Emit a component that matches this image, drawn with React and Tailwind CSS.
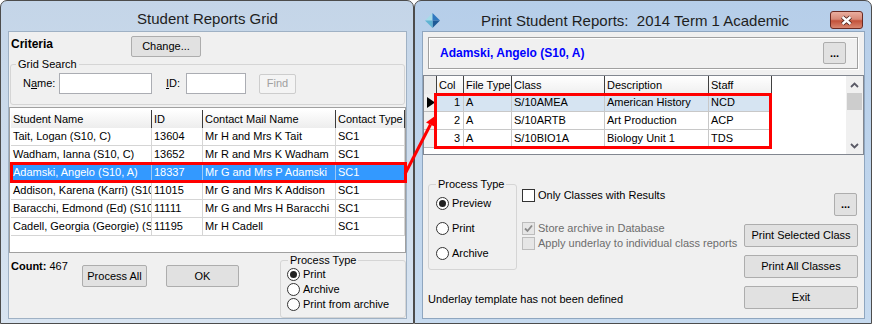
import React from 'react';

const leftRows = [
  ['Tait, Logan (S10, C)', '13604', 'Mr H and Mrs K Tait', 'SC1'],
  ['Wadham, Ianna (S10, C)', '13652', 'Mr R and Mrs K Wadham', 'SC1'],
  ['Adamski, Angelo (S10, A)', '18337', 'Mr G and Mrs P Adamski', 'SC1'],
  ['Addison, Karena (Karri) (S10, A)', '11015', 'Mr G and Mrs K Addison', 'SC1'],
  ['Baracchi, Edmond (Ed) (S10, A)', '11111', 'Mr G and Mrs H Baracchi', 'SC1'],
  ['Cadell, Georgia (Georgie) (S10, A)', '11195', 'Mr H Cadell', 'SC1'],
];

const classRows = [
  ['1', 'A', 'S/10AMEA', 'American History', 'NCD'],
  ['2', 'A', 'S/10ARTB', 'Art Production', 'ACP'],
  ['3', 'A', 'S/10BIO1A', 'Biology Unit 1', 'TDS'],
];

function Btn({ className = '', disabled, children }) {
  const look = disabled
    ? 'border-[#cdcdcd] bg-[#f4f4f4] text-[#a0a0a0]'
    : 'border-[#adadad] bg-[#e1e1e1] text-black';
  return (
    <div className={`flex items-center justify-center border rounded-[2px] whitespace-nowrap ${look} ${className}`}>
      {children}
    </div>
  );
}

function Radio({ checked, children }) {
  return (
    <div className="flex items-center gap-[3px]">
      <span className="w-[13px] h-[13px] rounded-full border border-[#333] bg-white flex items-center justify-center">
        {checked && <span className="w-[7px] h-[7px] rounded-full bg-[#222]" />}
      </span>
      <span>{children}</span>
    </div>
  );
}

function Check({ checked, disabled, children }) {
  return (
    <div className={`flex items-center gap-[3px] h-[15px] ${disabled ? 'text-[#6d6d6d]' : ''}`}>
      <span
        className={`w-[13px] h-[13px] border flex items-center justify-center ${
          disabled ? 'border-[#bcbcbc] bg-[#e6e6e6]' : 'border-[#333] bg-white'
        }`}
      >
        {checked && (
          <svg width="9" height="9" viewBox="0 0 9 9">
            <path d="M1 4.5 L3.5 7 L8 1.5" fill="none" stroke="#8a8a8a" strokeWidth="1.8" />
          </svg>
        )}
      </span>
      <span>{children}</span>
    </div>
  );
}

function Chevron({ down }) {
  return (
    <svg width="9" height="6" viewBox="0 0 9 6">
      <path d={down ? 'M1 1 L4.5 4.5 L8 1' : 'M1 5 L4.5 1.5 L8 5'} fill="none" stroke="#5a5a66" strokeWidth="1.8" />
    </svg>
  );
}

function LeftWindow() {
  const widths = ['w-[141px]', 'w-[51px]', 'w-[133px]', 'flex-1'];
  return (
    <div className="w-[414px] h-[324px] flex flex-col border border-[#4c4c4c] rounded-t-[7px] bg-linear-to-b from-[#c4d5e8] to-[#d8e4f1] pl-[7px] pr-[6px] pb-[4px]">
      <div className="h-[30px] flex justify-center pt-[9px] text-[15px] leading-[17px] text-[#1e1e1e]">
        Student Reports Grid
      </div>
      <div className="flex-1 border border-[#9fb1c4] bg-[#f0f0f0] flex flex-col">
        <div className="flex items-center pt-[4px] h-[25px]">
          <div className="w-[122px] pl-[2px] mb-[6px] font-bold text-[12px]">Criteria</div>
          <Btn className="w-[70px] h-[21px]">Change...</Btn>
        </div>

        <fieldset className="mx-[1px] h-[48px] border border-[#d5d5d5] rounded-[3px]">
          <legend className="ml-[5px] px-[2px] leading-[14px]">Grid Search</legend>
          <div className="flex items-center pl-[12px] pt-[2px]">
            <span className="w-[36px]">
              N<u>a</u>me:
            </span>
            <div className="w-[93px] h-[21px] bg-white border border-[#abadb3]" />
            <span className="ml-[14px] w-[20px]">
              <u>I</u>D:
            </span>
            <div className="w-[60px] h-[21px] bg-white border border-[#abadb3]" />
            <Btn disabled className="ml-[13px] w-[37px] h-[20px]">
              Find
            </Btn>
          </div>
        </fieldset>

        <div className="mt-[2px] h-[146px] border border-[#a0a0a0] bg-white pt-[2px] pl-[1px]">
          <div className="flex h-[18px] bg-linear-to-b from-white to-[#ededed]">
            {['Student Name', 'ID', 'Contact Mail Name', 'Contact Type'].map((h, i) => (
              <div key={h} className={`${widths[i]} flex items-center pl-[2px] border-r border-[#3c3c3c] whitespace-nowrap overflow-hidden`}>
                {h}
              </div>
            ))}
          </div>
          {leftRows.map((r, ri) => {
            const sel = ri === 2;
            return (
              <div key={ri} className={`flex h-[18px] border-b ${sel ? 'bg-[#3399ff] text-white border-[#3399ff]' : 'border-[#d5d5d5]'}`}>
                {r.map((c, i) => (
                  <div
                    key={i}
                    className={`${widths[i]} flex items-center pl-[2px] border-r whitespace-nowrap overflow-hidden ${sel ? 'border-[#9cc8f5]' : 'border-[#d5d5d5]'}`}
                  >
                    {c}
                  </div>
                ))}
              </div>
            );
          })}
        </div>

        <div className="flex h-[65px]">
          <div className="w-[73px] pl-[2px] pt-[5px]">
            <b>Count:</b> 467
          </div>
          <Btn className="mt-[12px] w-[65px] h-[22px]">Process All</Btn>
          <Btn className="mt-[12px] ml-[19px] w-[73px] h-[22px]">OK</Btn>
          <fieldset className="ml-auto w-[126px] h-full border border-[#d5d5d5] rounded-[3px]">
            <legend className="ml-[7px] px-[2px] leading-[14px]">Process Type</legend>
            <div className="pl-[6px]">
              <div className="h-[15px] flex items-center"><Radio checked>Print</Radio></div>
              <div className="h-[15px] flex items-center"><Radio>Archive</Radio></div>
              <div className="h-[15px] flex items-center"><Radio>Print from archive</Radio></div>
            </div>
          </fieldset>
        </div>
      </div>
    </div>
  );
}

function RightWindow() {
  const widths = ['w-[27px]', 'w-[48px]', 'w-[93px]', 'w-[104px]', 'w-[63px]'];
  return (
    <div className="w-[458px] h-[324px] flex flex-col border border-[#4c4c4c] rounded-t-[7px] bg-linear-to-b from-[#b6cee9] to-[#c6daef] pl-[7px] pr-[6px] pb-[4px]">
      <div className="h-[30px] flex items-start">
        <svg className="mt-[12px] ml-[3px]" width="15" height="15" viewBox="0 0 15 15">
          <polygon points="0,7.5 7.5,0 7.5,7.5" fill="#a6dbe8" />
          <polygon points="7.5,0 15,7.5 7.5,7.5" fill="#2f78bf" />
          <polygon points="15,7.5 7.5,15 7.5,7.5" fill="#1d5a96" />
          <polygon points="7.5,15 0,7.5 7.5,7.5" fill="#5fb3d2" />
        </svg>
        <div className="flex-1 text-center pt-[11px] text-[15px] leading-[17px] text-[#1e1e1e] whitespace-pre">
          Print Student Reports:  2014 Term 1 Academic
        </div>
        <div className="mt-[10px] mr-[2px] w-[33px] h-[18px] rounded-[3px] border border-[#6b2a22] bg-[linear-gradient(#eaae9f,#d88a78_45%,#c3523a_55%,#d9866f)] flex items-center justify-center">
          <svg width="13" height="11" viewBox="0 0 13 11">
            <path d="M2.5 2 L10.5 9 M10.5 2 L2.5 9" stroke="#4a1f18" strokeWidth="4.2" />
            <path d="M2.5 2 L10.5 9 M10.5 2 L2.5 9" stroke="#ffffff" strokeWidth="2.4" />
          </svg>
        </div>
      </div>

      <div className="flex-1 border border-[#8fa6bf] bg-[#f0f0f0] flex flex-col">
        <div className="mt-[5px] ml-[5px] w-[430px] h-[32px] border border-[#a0a0a0] shadow-[inset_1px_1px_0_#fff,1px_1px_0_#fff] flex items-center pl-[11px] pr-[11px]">
          <div className="flex-1 font-bold text-[12px] text-[#0000ff]">Adamski, Angelo (S10, A)</div>
          <Btn className="w-[23px] h-[22px] font-bold">...</Btn>
        </div>

        <div className="mt-[6px] h-[80px] border border-[#828790] bg-white flex">
          <div className="flex-1 flex flex-col">
            <div className="flex h-[18px]">
              <div className="w-[13px] bg-[#ececec] border-r border-[#404040]" />
              {['Col', 'File Type', 'Class', 'Description', 'Staff'].map((h, i) => (
                <div key={h} className={`${widths[i]} flex items-center pl-[2px] border-r border-[#404040] bg-linear-to-b from-white to-[#efefef] whitespace-nowrap overflow-hidden`}>
                  {h}
                </div>
              ))}
            </div>
            {classRows.map((r, ri) => (
              <div key={ri} className="flex h-[18px]">
                <div className="w-[13px] bg-[#f0f0f0] border-r border-b border-[#bdbdbd] flex items-center pl-[3px]">
                  {ri === 0 && (
                    <svg width="8" height="11" viewBox="0 0 8 11">
                      <polygon points="0,0 8,5.5 0,11" fill="#000" />
                    </svg>
                  )}
                </div>
                {r.map((c, i) => (
                  <div
                    key={i}
                    className={`${widths[i]} flex items-center border-r border-b border-[#c8c8c8] whitespace-nowrap overflow-hidden ${
                      i === 0 ? 'justify-end pr-[3px]' : 'pl-[2px]'
                    } ${ri === 0 ? 'bg-[#d6e4f2]' : 'bg-white'}`}
                  >
                    {c}
                  </div>
                ))}
              </div>
            ))}
          </div>
          <div className="w-[17px] bg-[#f0f0f0] flex flex-col">
            <div className="h-[17px] flex items-center justify-center"><Chevron /></div>
            <div className="h-[17px] mx-[1px] bg-[#cdcdcd]" />
            <div className="flex-1" />
            <div className="h-[17px] flex items-center justify-center"><Chevron down /></div>
          </div>
        </div>

        <div className="flex-1 flex">
          <div className="flex-1 flex flex-col pl-[5px]">
            <div className="flex items-start mt-[22px]">
              <fieldset className="w-[89px] h-[93px] border border-[#d5d5d5] rounded-[3px]">
                <legend className="ml-[7px] px-[2px] leading-[14px]">Process Type</legend>
                <div className="pl-[7px]">
                  <div className="h-[25px] flex items-center"><Radio checked>Preview</Radio></div>
                  <div className="h-[25px] flex items-center"><Radio>Print</Radio></div>
                  <div className="h-[25px] flex items-center"><Radio>Archive</Radio></div>
                </div>
              </fieldset>
              <div className="ml-[5px] pt-[11px]">
                <Check>Only Classes with Results</Check>
                <div className="mt-[18px]">
                  <Check checked disabled>Store archive in Database</Check>
                </div>
                <Check disabled>Apply underlay to individual class reports</Check>
              </div>
            </div>
            <div className="mt-auto pb-[11px]">Underlay template has not been defined</div>
          </div>
          <div className="flex flex-col items-end pr-[6px] pt-[38px]">
            <Btn className="mr-[1px] w-[23px] h-[23px] font-bold">...</Btn>
            <Btn className="mt-[8px] w-[114px] h-[23px]">Print Selected Class</Btn>
            <Btn className="mt-[8px] w-[114px] h-[23px]">Print All Classes</Btn>
            <Btn className="mt-[8px] w-[114px] h-[23px]">Exit</Btn>
          </div>
        </div>
      </div>
    </div>
  );
}

export default function App() {
  return (
    <div className="relative w-[872px] h-[325px] bg-white flex overflow-hidden font-['Liberation_Sans',Arial,sans-serif] text-[11px] text-black">
      <LeftWindow />
      <RightWindow />
      {/* annotation overlay: red boxes and arrow */}
      <svg className="absolute inset-0 pointer-events-none" width="872" height="325">
        <rect x="11.5" y="163.5" width="394" height="18" fill="none" stroke="#ff0000" strokeWidth="3" />
        <rect x="435.5" y="94.5" width="335" height="53" fill="none" stroke="#ff0000" strokeWidth="3" />
        <line x1="405" y1="174" x2="430.5" y2="124.5" stroke="#ff0000" strokeWidth="3" />
        <polygon points="435,116 435.5,127 426,122.5" fill="#ff0000" />
      </svg>
    </div>
  );
}
